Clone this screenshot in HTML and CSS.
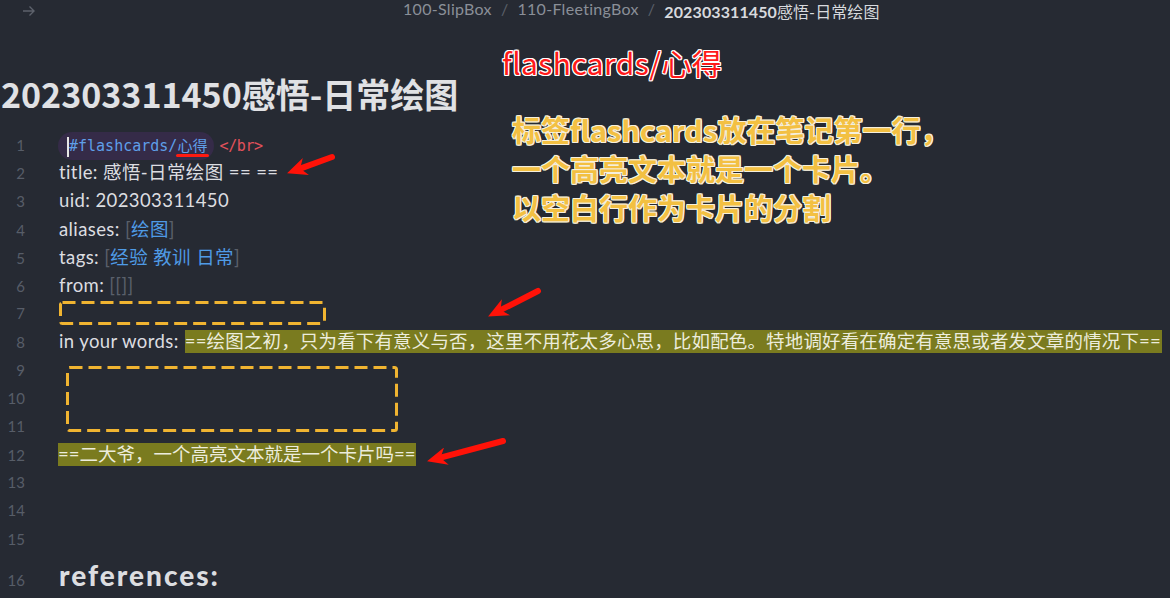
FILE: index.html
```html
<!DOCTYPE html>
<html lang="zh">
<head>
<meta charset="utf-8">
<title>202303311450感悟-日常绘图</title>
<link rel="stylesheet" href="styles.css">
</head>
<body>
<div class="page">
  <header class="topbar">
    <svg class="nav-arrow" width="14" height="12" viewBox="0 0 14 12"><path d="M1 6 H12 M7.5 1.5 L12 6 L7.5 10.5" fill="none" stroke="#5d626c" stroke-width="1.4"/></svg>
    <nav class="crumbs">
      <span class="crumb">100-SlipBox</span><span class="sep">/</span><span class="crumb">110-FleetingBox</span><span class="sep">/</span><span class="crumb current"><b>202303311450</b>感悟-日常绘图</span>
    </nav>
  </header>

  <h1 class="title">202303311450感悟-日常绘图</h1>

  <div class="editor">
    <div class="line"><span class="ln">1</span><span class="txt"><span class="tag"><span class="cursor"></span>#flashcards/<span class="mark">心得</span></span> <span class="html">&lt;/br&gt;</span></span></div>
    <div class="line"><span class="ln">2</span><span class="txt">title: 感悟-日常绘图 == ==</span></div>
    <div class="line"><span class="ln">3</span><span class="txt">uid: 202303311450</span></div>
    <div class="line"><span class="ln">4</span><span class="txt">aliases: <span class="br">[</span><span class="link">绘图</span><span class="br">]</span></span></div>
    <div class="line"><span class="ln">5</span><span class="txt">tags: <span class="br">[</span><span class="link">经验 教训 日常</span><span class="br">]</span></span></div>
    <div class="line"><span class="ln">6</span><span class="txt">from: <span class="br">[[]]</span></span></div>
    <div class="line"><span class="ln">7</span><span class="txt"></span></div>
    <div class="line"><span class="ln">8</span><span class="txt">in your words: <span class="hl">==绘图之初，只为看下有意义与否，这里不用花太多心思，比如配色。特地调好看在确定有意思或者发文章的情况下==</span></span></div>
    <div class="line"><span class="ln">9</span><span class="txt"></span></div>
    <div class="line"><span class="ln">10</span><span class="txt"></span></div>
    <div class="line"><span class="ln">11</span><span class="txt"></span></div>
    <div class="line"><span class="ln">12</span><span class="txt"><span class="hl">==二大爷，一个高亮文本就是一个卡片吗==</span></span></div>
    <div class="line"><span class="ln">13</span><span class="txt"></span></div>
    <div class="line"><span class="ln">14</span><span class="txt"></span></div>
    <div class="line"><span class="ln">15</span><span class="txt"></span></div>
    <div class="line heading"><span class="ln">16</span><span class="txt">references:</span></div>
  </div>

  <div class="note-red">flashcards/心得</div>
  <div class="note-yellow">标签flashcards放在笔记第一行，<br>一个高亮文本就是一个卡片。<br>以空白行作为卡片的分割</div>

  <svg class="overlay" width="1170" height="598" viewBox="0 0 1170 598">
    <defs>
      <marker id="head" markerUnits="userSpaceOnUse" markerWidth="20" markerHeight="18" viewBox="0 0 20 18" refX="9" refY="9" orient="auto">
        <path d="M20 9 L0 0 L6 9 L0 18 Z" fill="#ff1208"/>
      </marker>
    </defs>
    <rect x="60.5" y="302.5" width="264" height="21" rx="2" fill="none" stroke="#f0b431" stroke-width="3" stroke-dasharray="13 6"/>
    <rect x="67.5" y="367.5" width="329" height="63" rx="2" fill="none" stroke="#f0b431" stroke-width="3" stroke-dasharray="13 6"/>
    <path d="M332 157 L297.4 169.6" stroke="#ff1208" stroke-width="6" stroke-linecap="round" marker-end="url(#head)"/>
    <path d="M538 291 L497.9 311.4" stroke="#ff1208" stroke-width="6" stroke-linecap="round" marker-end="url(#head)"/>
    <path d="M503 441 L437.7 458.4" stroke="#ff1208" stroke-width="6" stroke-linecap="round" marker-end="url(#head)"/>
  </svg>
</div>
</body>
</html>
```
FILE: styles.css
```css
* { box-sizing: border-box; }
html, body { margin: 0; padding: 0; }
body {
  background: #262a33;
  color: #dcdde0;
  font-family: "Lato", "Noto Sans CJK SC", sans-serif;
  width: 1170px;
  height: 598px;
  overflow: hidden;
}
.page { position: relative; width: 1170px; height: 598px; }

.topbar {
  height: 22px;
  display: flex;
  align-items: center;
  padding-left: 22px;
}
.nav-arrow { flex: none; }
.crumbs {
  margin-left: 367px;
  font-size: 16px;
  color: #8a8f98;
  display: flex;
  gap: 9px;
  white-space: nowrap;
  letter-spacing: 0.3px;
  font-family: "Lato", "Noto Sans CJK SC", sans-serif;
}
.sep { color: #5b606a; }
.crumb.current { color: #d8dade; letter-spacing: 0.1px; }
.crumb.current b { font-weight: 700; }

.title {
  margin: 51px 0 0 1px;
  height: 42px;
  line-height: 42px;
  font-size: 34px;
  font-weight: 700;
  color: #e0e1e4;
  font-family: "Noto Sans CJK SC", sans-serif;
}

.editor { margin-top: 15px; }
.line {
  display: flex;
  align-items: baseline;
  height: 28.2px;
  line-height: 28.2px;
  font-size: 18.5px;
  white-space: nowrap;
}
.ln {
  width: 25px;
  flex: none;
  text-align: right;
  font-size: 15px;
  color: #575d68;
  font-family: "Lato", sans-serif;
}
.txt { margin-left: 34px; letter-spacing: 0.4px; }

.tag {
  position: relative;
  display: inline-block;
  background: #352b48;
  border-radius: 14px;
  padding: 0 7px 0 11px;
  margin-left: -1px;
  height: 28px;
  line-height: 28px;
  font-family: "DejaVu Sans Mono", "Noto Sans CJK SC", monospace;
  font-size: 15px;
  letter-spacing: 0;
  color: #5f9fe8;
}
.cursor {
  position: absolute;
  left: 9px;
  top: 5px;
  width: 1.5px;
  height: 20px;
  background: #e6e6e6;
}
.mark {
  position: relative;
}
.mark::after {
  content: "";
  position: absolute;
  left: -1px;
  right: -2px;
  bottom: -2px;
  height: 3px;
  border-radius: 2px;
  background: #ff1a10;
}
.html {
  font-family: "DejaVu Sans Mono", monospace;
  font-size: 15px;
  letter-spacing: -0.4px;
  color: #e2515b;
}
.br { color: #5a606b; }
.link { color: #4f9be6; }
.hl {
  background: #7a7b1f;
  color: #ececdc;
  display: inline-block;
  line-height: 23px;
  padding-right: 1px;
  letter-spacing: 0.15px;
}
.line:nth-child(8) .hl { margin-left: 1px; }
.line:nth-child(12) .txt { margin-left: 33px; }
.line:nth-child(12) .hl { letter-spacing: 0; }

.line.heading {
  height: 44px;
  line-height: 44px;
}
.line.heading .txt {
  font-size: 28px;
  font-weight: 900;
  letter-spacing: 2px;
}

.note-red {
  position: absolute;
  left: 502px;
  top: 43px;
  font-family: "Noto Sans CJK SC", sans-serif;
  font-size: 30px;
  line-height: 38px;
  color: #ff1a1a;
  text-shadow: 1px 0 #fff, -1px 0 #fff, 0 1px #fff, 0 -1px #fff, 1px 1px #fff, -1px -1px #fff, 1px -1px #fff, -1px 1px #fff;
  letter-spacing: 0.4px;
}
.note-yellow {
  position: absolute;
  left: 512px;
  top: 110px;
  font-family: "Noto Sans CJK SC", sans-serif;
  font-weight: 700;
  font-size: 29px;
  line-height: 39px;
  color: #f3c042;
  text-shadow: 1px 0 #f5efdc, -1px 0 #f5efdc, 0 1px #f5efdc, 0 -1px #f5efdc, 1px 1px #f5efdc, -1px -1px #f5efdc, 1px -1px #f5efdc, -1px 1px #f5efdc;
  white-space: nowrap;
}

.overlay {
  position: absolute;
  left: 0;
  top: 0;
  pointer-events: none;
}
```
